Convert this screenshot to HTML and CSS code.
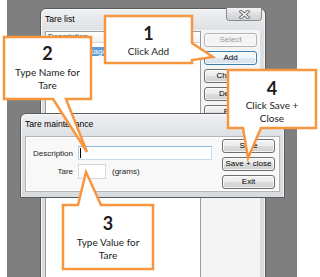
FILE: index.html
```html
<!DOCTYPE html>
<html lang="en">
<head>
  <meta charset="UTF-8">
  <title>Tare list help</title>
  <link rel="stylesheet" href="styles.css">
</head>
<body>

  <div class="desktop">

    <div class="window tare-list">
      <div class="titlebar">
        <span class="title">Tare list</span>
        <span class="close-btn">
          <svg width="11" height="9" viewBox="0 0 11 9">
            <path d="M2,1.5 L9,7.5 M9,1.5 L2,7.5" stroke="#6d6d6d" stroke-width="3.2" stroke-linecap="square"/>
            <path d="M2,1.5 L9,7.5 M9,1.5 L2,7.5" stroke="#fff" stroke-width="1.4" stroke-linecap="square"/>
          </svg>
        </span>
      </div>
      <div class="client list-client">
        <div class="listbox">
          <div class="list-header">Description</div>
          <div class="list-row selected">Large package</div>
        </div>
        <div class="side-buttons">
          <button class="btn" disabled>Select</button>
          <button class="btn focused">Add</button>
          <button class="btn">Change</button>
          <button class="btn">Delete</button>
          <button class="btn">Exit</button>
        </div>
      </div>
    </div>

    <div class="window tare-maint">
      <div class="titlebar">
        <span class="title">Tare maintenance</span>
      </div>
      <div class="client maint-client">
        <div class="form">
          <label>Description</label>
          <div class="textbox desc"><span class="caret"></span></div>
          <label>Tare</label>
          <div class="tare-row">
            <div class="textbox tare"></div>
            <span class="unit">(grams)</span>
          </div>
        </div>
        <div class="maint-buttons">
          <button class="btn">Save</button>
          <button class="btn">Save + close</button>
          <button class="btn">Exit</button>
        </div>
      </div>
    </div>

  </div>

  <svg class="callouts" width="320" height="277" viewBox="0 0 320 277">
    <path d="M105,16 H192 V43 L213,57 L192,60 V63 H105 Z"/>
    <path d="M4,37 H91 V99 H66 L87,152 L53,99 H4 Z"/>
    <path d="M63,205 H78 L86,172 L101,205 H153 V269 H63 Z"/>
    <path d="M228,70 H316 V128 H261 L248,158 L243,128 H228 Z"/>
  </svg>

  <div class="callout-label c1">
    <span class="num">1</span>
    <span class="txt">Click Add</span>
  </div>
  <div class="callout-label c2">
    <span class="num">2</span>
    <span class="txt">Type Name for<br>Tare</span>
  </div>
  <div class="callout-label c3">
    <span class="num">3</span>
    <span class="txt">Type Value for<br>Tare</span>
  </div>
  <div class="callout-label c4">
    <span class="num">4</span>
    <span class="txt">Click Save +<br>Close</span>
  </div>

</body>
</html>
```

FILE: styles.css
```css
* {
  margin: 0;
  padding: 0;
  box-sizing: border-box;
}

body {
  width: 320px;
  height: 277px;
  position: relative;
  overflow: hidden;
  background-color: #fff;
  font-family: "Liberation Sans", Arial, sans-serif;
  font-size: 8px;
  color: #000;
}

.desktop {
  margin-left: 7px;
  width: 290px;
  height: 277px;
  position: relative;
  overflow: hidden;
  background-color: #7f7f7f;
}

/* windows */

.window {
  position: absolute;
  display: flex;
  flex-direction: column;
  border: 1px solid #5a5a5a;
  border-radius: 6px 6px 0 0;
  background: linear-gradient(#eef0f2, #dcdfe3 24px, #d9dcdf);
  box-shadow: inset 1px 1px 0 #f8f9fa, inset -1px 0 0 #f3f4f5;
}

.tare-list {
  left: 33px;
  top: 8px;
  width: 226px;
  height: 300px;
  padding: 0 5px 0 4px;
}

.tare-maint {
  left: 13px;
  top: 113px;
  width: 265px;
  height: 85px;
  padding: 0 4px 5px 4px;
}

.titlebar {
  display: flex;
  align-items: center;
  height: 21px;
  padding-bottom: 2px;
  font-size: 8.6px;
}

.tare-maint .titlebar {
  height: 22px;
}

.close-btn {
  position: absolute;
  top: -1px;
  right: 3px;
  width: 36px;
  height: 13px;
  display: flex;
  align-items: center;
  justify-content: center;
  border: 1px solid #8a8a8a;
  border-top: none;
  border-radius: 0 0 4px 4px;
  background: linear-gradient(#f2f3f4, #dcdee1 50%, #cfd2d6);
}

.client {
  flex: 1;
  display: flex;
}

/* tare list */

.list-client {
  background-color: #f4f4f4;
}

.listbox {
  width: 156px;
  background-color: #fff;
  border: 1px solid #9c9c9c;
  border-bottom: none;
  margin-top: 1px;
}

.list-header {
  height: 11px;
  line-height: 10px;
  padding-left: 2px;
  background: linear-gradient(#fff, #f1f2f4);
  border-bottom: 1px solid #d5d5d5;
  color: #333;
}

.list-row {
  height: 9px;
  line-height: 9px;
  margin-top: 4px;
  padding-left: 8px;
}

.list-row.selected {
  background-color: #5f9bd8;
  color: #fff;
}

.side-buttons {
  width: 59px;
  display: flex;
  flex-direction: column;
  gap: 4px;
  padding: 3px 3px 0 3px;
}

/* buttons */

.btn {
  width: 53px;
  height: 14px;
  font-family: "Liberation Sans", Arial, sans-serif;
  font-size: 8px;
  line-height: 12px;
  color: #000;
  border: 1px solid #707070;
  border-radius: 3px;
  background: linear-gradient(#f3f3f3, #ebebeb 50%, #dddddd 50%, #cfcfcf);
  box-shadow: inset 0 0 0 1px rgba(255, 255, 255, 0.7);
}

.btn:disabled {
  color: #9a9a9a;
  border-color: #b3b3b3;
  background: #f4f4f4;
}

.btn.focused {
  border-color: #3c7fb1;
  background: linear-gradient(#f7fbfd, #eef5fa 50%, #dfe9f1 50%, #d5e2ec);
}

/* tare maintenance */

.maint-client {
  justify-content: space-between;
  background-color: #f8f8f8;
  border: 1px solid #b3b5b8;
  box-shadow: inset 0 0 0 1px #fff;
}

.form {
  display: grid;
  grid-template-columns: 47px auto;
  column-gap: 5px;
  row-gap: 4px;
  align-content: start;
  align-items: center;
  padding-top: 9px;
}

.form label {
  text-align: right;
  color: #222;
}

.textbox {
  background-color: #fff;
  border: 1px solid #d4d6da;
}

.textbox.desc {
  width: 134px;
  height: 14px;
  padding: 1px 0 0 1px;
  border-color: #8fb8e0 #c5daed #c5daed #b5c9dd;
}

.caret {
  display: block;
  width: 1px;
  height: 10px;
  background-color: #000;
}

.tare-row {
  display: flex;
  align-items: center;
  gap: 6px;
}

.textbox.tare {
  width: 28px;
  height: 15px;
}

.unit {
  color: #222;
}

.maint-buttons {
  display: flex;
  flex-direction: column;
  gap: 4px;
  padding: 2px 4px 0 0;
}

/* callouts */

.callouts {
  position: absolute;
  left: 0;
  top: 0;
  z-index: 10;
}

.callouts path {
  fill: #fff;
  stroke: #f7963f;
  stroke-width: 2.5;
  stroke-linejoin: miter;
}

.callout-label {
  position: absolute;
  z-index: 11;
  display: flex;
  flex-direction: column;
  align-items: center;
  text-align: center;
  font-family: Lato, "Open Sans", sans-serif;
  color: #1c1c1c;
}

.callout-label .num {
  font-size: 18px;
  font-weight: bold;
  line-height: 20px;
}

.callout-label .txt {
  font-size: 10px;
  line-height: 13px;
  margin-top: 3px;
}

.c1 {
  left: 105px;
  top: 23px;
  width: 87px;
}

.c1 .txt {
  margin-top: 2px;
}

.c2 {
  left: 4px;
  top: 43px;
  width: 87px;
}

.c3 {
  left: 63px;
  top: 213px;
  width: 90px;
}

.c4 {
  left: 228px;
  top: 78px;
  width: 88px;
}

.c4 .txt {
  margin-top: 1px;
}
```
